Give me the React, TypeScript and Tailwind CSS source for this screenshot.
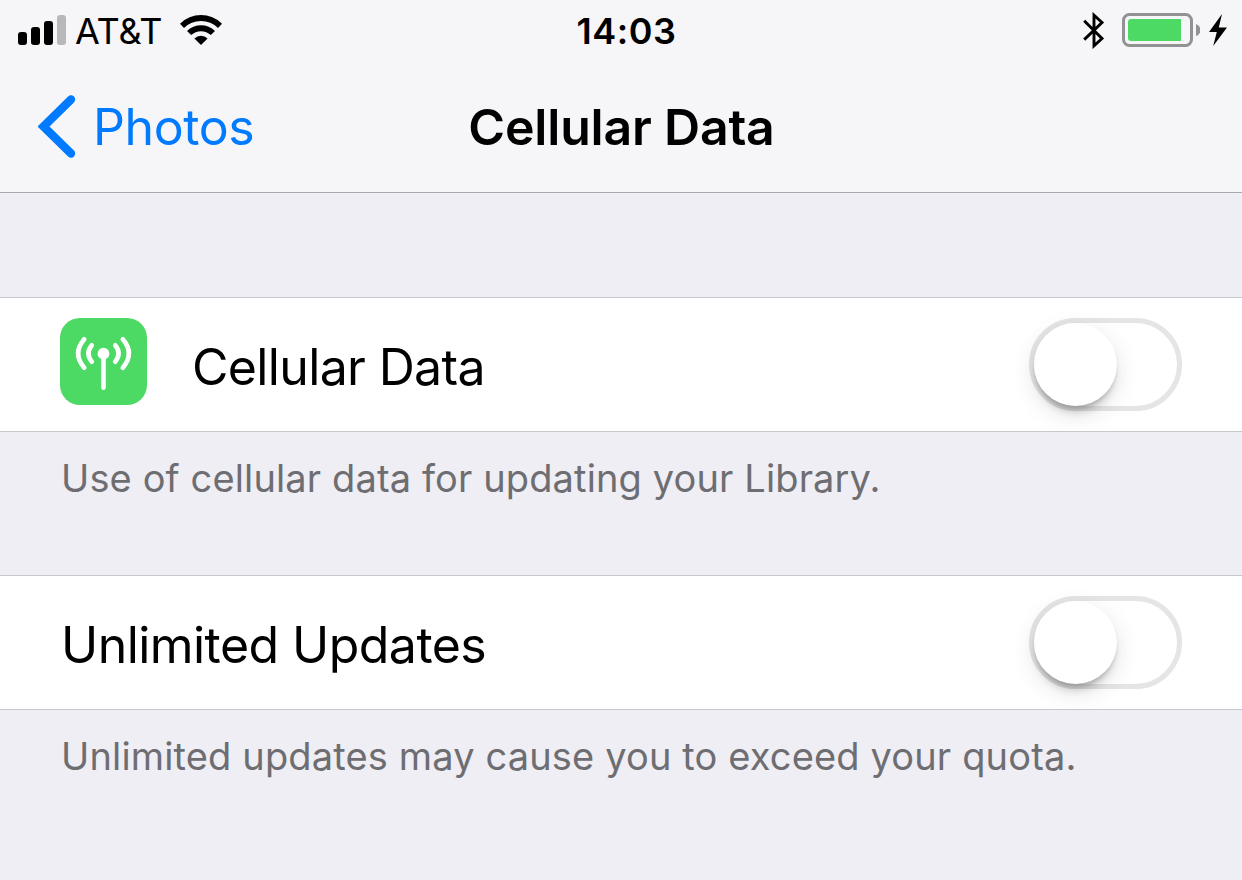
import { useState } from "react";

function SignalBars() {
  return (
    <svg width="49" height="31" viewBox="0 0 49 31">
      <rect x="0" y="17" width="9" height="13" rx="3" fill="#000" />
      <rect x="13" y="12" width="9" height="18" rx="3" fill="#000" />
      <rect x="26" y="6" width="9" height="24" rx="3" fill="#000" />
      <rect x="39" y="0" width="9" height="30" rx="3" fill="#b8b8ba" />
    </svg>
  );
}

function WifiIcon() {
  return (
    <svg width="42" height="30" viewBox="0 0 42 30">
      <path d="M0 8.7A30 30 0 0 1 42 8.7L38 12.9A24.2 24.2 0 0 0 4 12.9Z" />
      <path d="M7 16A20 20 0 0 1 35 16L30.8 20.1A14.3 14.3 0 0 0 11.2 20.1Z" />
      <path d="M14.4 23.4A9.5 9.5 0 0 1 27.6 23.4L21 30Z" />
    </svg>
  );
}

function BluetoothIcon() {
  return (
    <svg width="22" height="37" viewBox="0 0 22 37" fill="none" stroke="#000" strokeWidth="2.9">
      <path d="M1.2 8.8L19 26.5L11 33.8V3.2L19 10.5L1.2 27.6" />
    </svg>
  );
}

function BatteryIcon() {
  return (
    <svg width="78" height="34" viewBox="0 0 78 34">
      <rect x="1.5" y="1.5" width="68" height="31" rx="6" fill="none" stroke="#929294" strokeWidth="3" />
      <path d="M59 6V28H9A3 3 0 0 1 6 25V9A3 3 0 0 1 9 6Z" fill="#4cd964" />
      <path d="M74 11A6.3 6.3 0 0 1 74 23Z" fill="#929294" />
    </svg>
  );
}

function BoltIcon() {
  return (
    <svg width="18" height="32" viewBox="0 0 18 32">
      <path d="M13 0L0 18H7.8L4.2 32L18 13.4H9.8Z" />
    </svg>
  );
}

function CellularIcon() {
  return (
    <div className="h-[87px] w-[87px] rounded-[20px] bg-[#4cd964]">
      <svg width="87" height="87" viewBox="0 0 87 87" fill="none" stroke="#fff" strokeLinecap="round">
        <circle cx="43.5" cy="35.7" r="5.9" fill="#fff" stroke="none" />
        <path d="M43.5 38V69.8" strokeWidth="4.6" />
        <path d="M31.8 27.3Q25 35.5 31.8 43.7M55.2 27.3Q62 35.5 55.2 43.7" strokeWidth="4.6" />
        <path d="M24.2 21.3Q12 35.5 24.2 49.7M62.8 21.3Q75 35.5 62.8 49.7" strokeWidth="4.6" />
      </svg>
    </div>
  );
}

function Switch({ label }: { label: string }) {
  const [on, setOn] = useState(false);
  return (
    <button
      role="switch"
      aria-checked={on}
      aria-label={label}
      onClick={() => setOn(!on)}
      className={`flex h-[93px] w-[153px] shrink-0 items-center rounded-full border-[5px] ${
        on ? "justify-end border-[#4cd964] bg-[#4cd964]" : "border-[#e5e5e5] bg-white"
      }`}
    >
      <span className="h-[83px] w-[83px] rounded-full bg-white shadow-[0_9px_8px_-4px_rgba(0,0,0,0.2),0_3px_3px_rgba(0,0,0,0.08),0_8px_24px_rgba(0,0,0,0.12)]" />
    </button>
  );
}

export default function App() {
  return (
    <div className="h-[880px] w-[1242px] overflow-hidden bg-[#efeef4] font-['Inter',sans-serif] text-black">
      <header className="h-[193px] border-b border-[#a9a8ad] bg-[#f6f6f8]">
        {/* Status bar */}
        <div className="grid h-[60px] grid-cols-3 items-center pr-[15px] pl-[18px]">
          <div className="flex items-center">
            <span className="mb-[2px]">
              <SignalBars />
            </span>
            <span className="ml-[8px] text-[36px] leading-[62px] tracking-[-0.2px]">AT&amp;T</span>
            <span className="mb-[2px] ml-[18px]">
              <WifiIcon />
            </span>
          </div>
          <div className="pl-2 text-center text-[36px] leading-[62px] font-semibold tracking-[0.5px]">14:03</div>
          <div className="mb-[2px] flex items-center justify-end">
            <BluetoothIcon />
            <span className="ml-[17px]">
              <BatteryIcon />
            </span>
            <span className="ml-[9px]">
              <BoltIcon />
            </span>
          </div>
        </div>

        {/* Navigation bar */}
        <div className="grid h-[132px] grid-cols-3 items-center">
          <button className="flex items-center pl-[38px] text-[#007aff]">
            <svg width="38" height="63" viewBox="0 0 38 63" fill="none" stroke="currentColor" strokeWidth="8.4">
              <path d="M33 4.5L5.5 31.5L33 58.5" strokeLinecap="round" />
            </svg>
            <span className="mt-[2px] ml-[17px] text-[50px] leading-[60px] tracking-[-0.4px]">Photos</span>
          </button>
          <h1 className="pt-[2px] pl-[1px] text-center text-[50px] leading-[60px] font-semibold tracking-[-0.2px] whitespace-nowrap">
            Cellular Data
          </h1>
        </div>
      </header>

      <main className="pt-[104px]">
        <section>
          <div className="flex h-[135px] items-center border-y border-[#c8c7cc] bg-white pr-[60px] pl-[60px]">
            <div className="mb-[6px]">
              <CellularIcon />
            </div>
            <span className="mt-[5px] ml-[45px] flex-1 text-[50px] leading-[60px] tracking-[-0.65px]">
              Cellular Data
            </span>
            <Switch label="Cellular Data" />
          </div>
          <p className="h-[143px] pt-[22px] pl-[61px] text-[38px] leading-[48px] tracking-[0.13px] text-[#6d6d72]">
            Use of cellular data for updating your Library.
          </p>
        </section>

        <section>
          <div className="flex h-[135px] items-center border-y border-[#c8c7cc] bg-white pr-[60px] pl-[61px]">
            <span className="mt-[5px] flex-1 text-[50px] leading-[60px] tracking-[-0.55px]">Unlimited Updates</span>
            <Switch label="Unlimited Updates" />
          </div>
          <p className="pt-[22px] pl-[61px] text-[38px] leading-[48px] tracking-[0.15px] text-[#6d6d72]">
            Unlimited updates may cause you to exceed your quota.
          </p>
        </section>
      </main>
    </div>
  );
}
